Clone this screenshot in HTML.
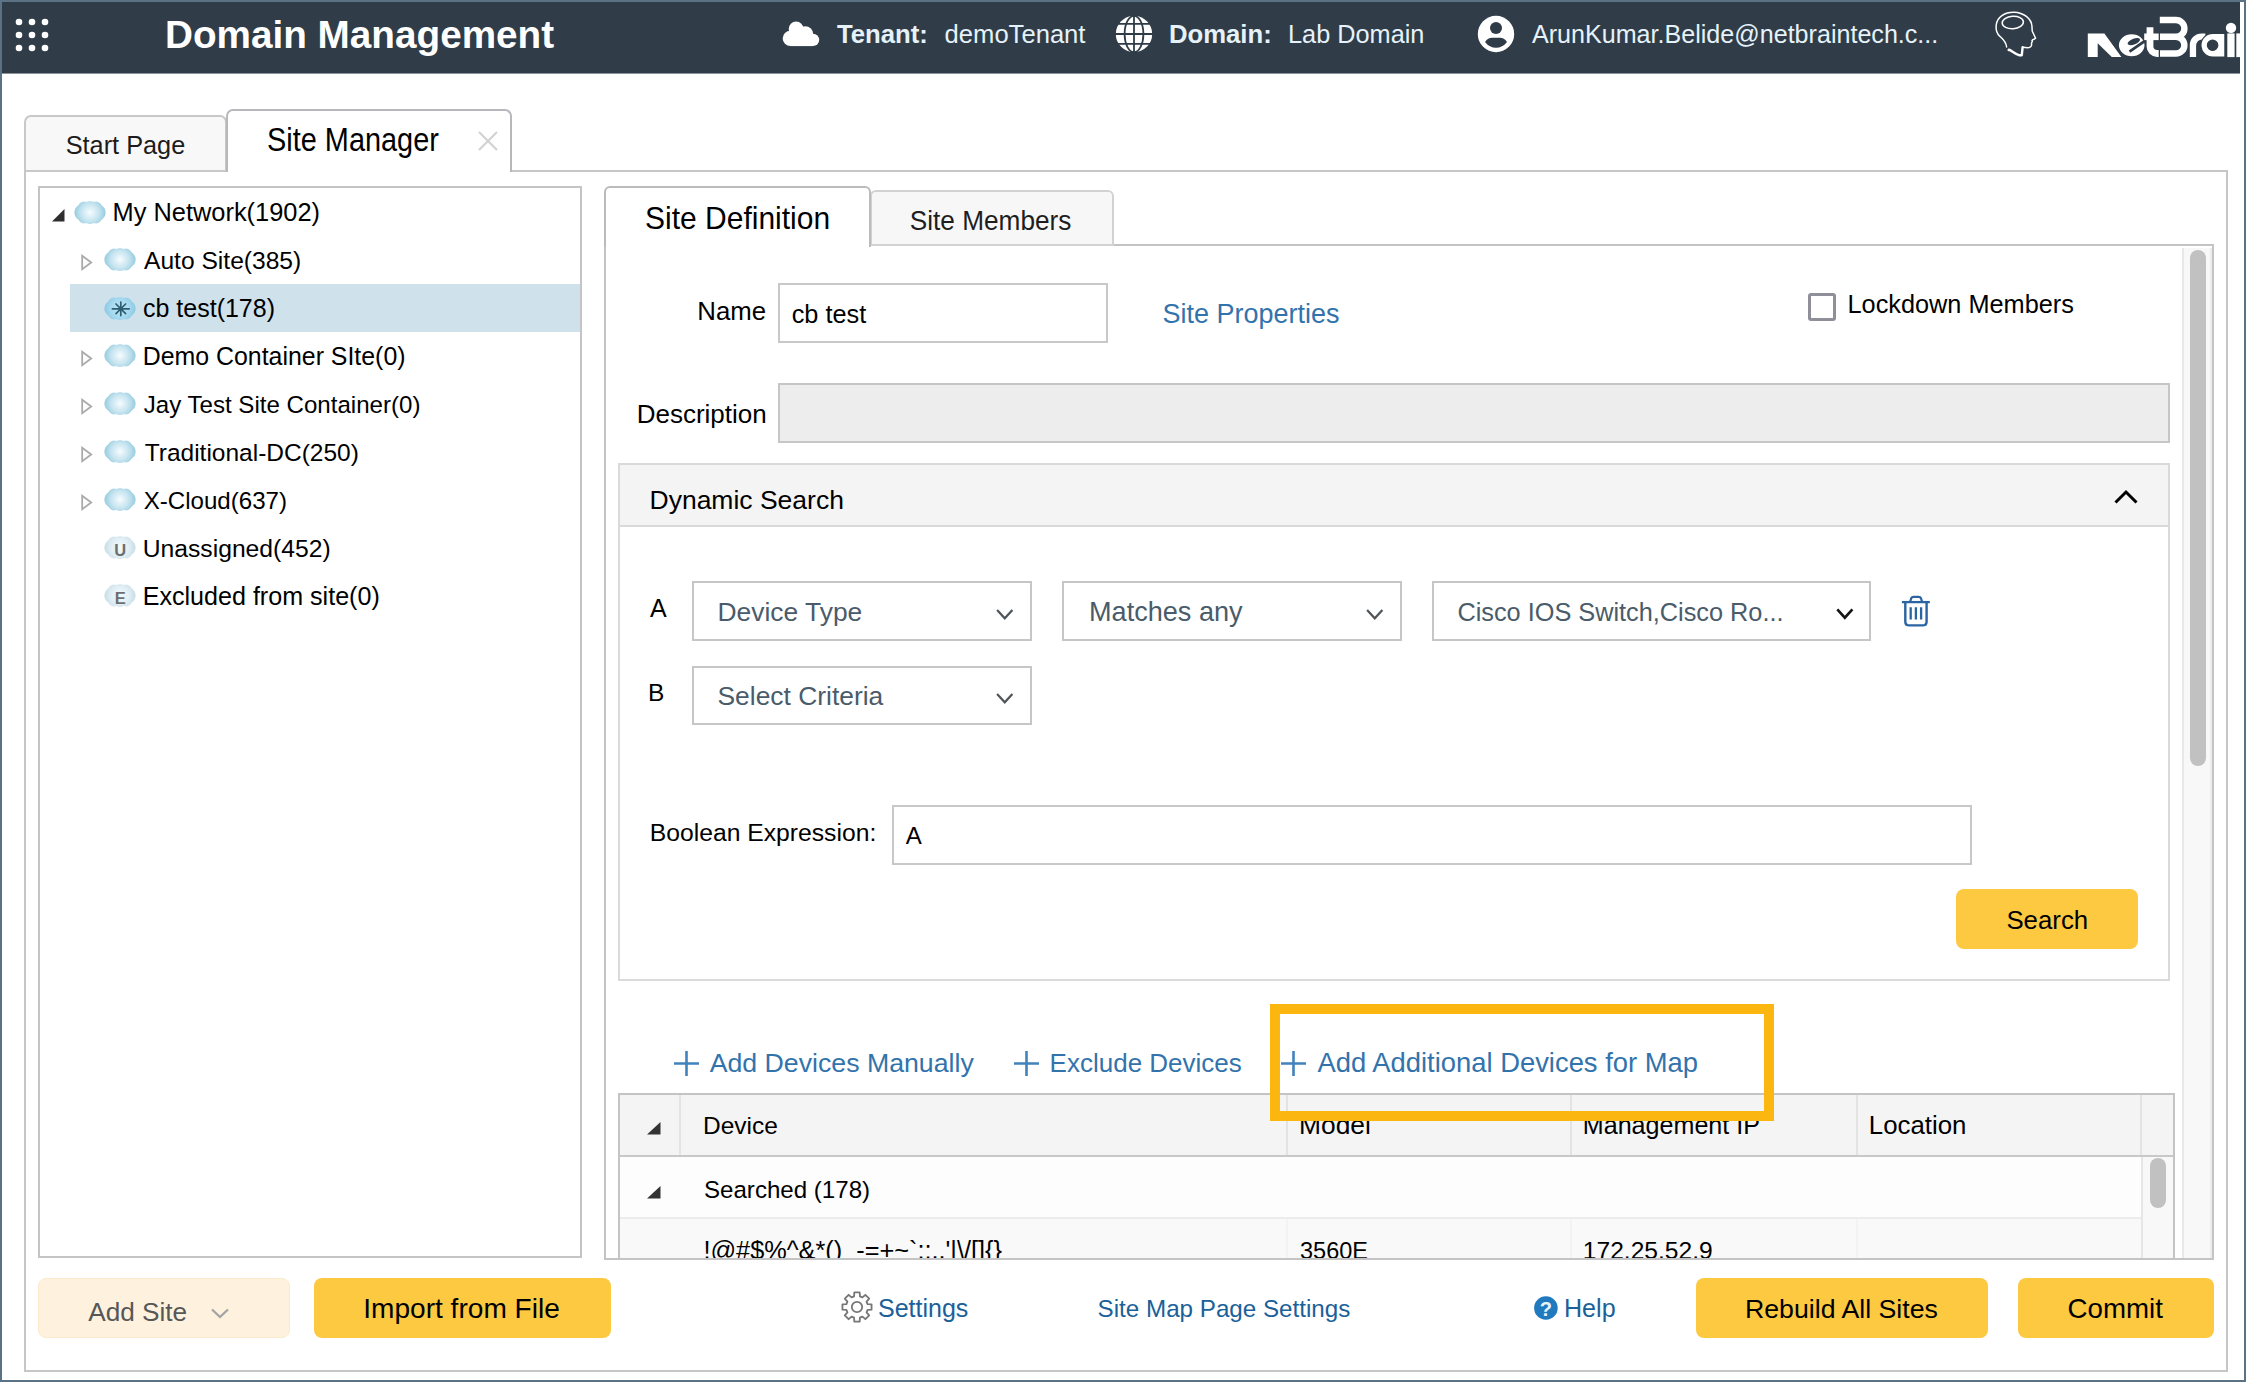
<!DOCTYPE html>
<html><head><meta charset="utf-8"><title>Domain Management</title>
<style>
html,body{margin:0;padding:0;}
body{width:2246px;height:1382px;position:relative;overflow:hidden;background:#5a7284;font-family:'Liberation Sans', sans-serif;}
.b{position:absolute;display:block;}
.t{position:absolute;white-space:pre;line-height:1;font-family:'Liberation Sans', sans-serif;}
</style></head><body>
<div class="b" style="left:2px;top:2px;width:2242px;height:1378px;background:#ffffff;"></div>
<div class="b" style="left:2px;top:2px;width:2238px;height:71px;background:#303d49;"></div>
<div class="b" style="left:2px;top:73px;width:2238px;height:1px;background:#8a939a;"></div>
<svg class="b" style="left:0px;top:0px;" width="60" height="60" viewBox="0 0 60 60"><circle cx="19" cy="22" r="3.3" fill="#fff"/><circle cx="19" cy="35" r="3.3" fill="#fff"/><circle cx="19" cy="48" r="3.3" fill="#fff"/><circle cx="32" cy="22" r="3.3" fill="#fff"/><circle cx="32" cy="35" r="3.3" fill="#fff"/><circle cx="32" cy="48" r="3.3" fill="#fff"/><circle cx="45" cy="22" r="3.3" fill="#fff"/><circle cx="45" cy="35" r="3.3" fill="#fff"/><circle cx="45" cy="48" r="3.3" fill="#fff"/></svg>
<svg class="b" style="left:776px;top:12px;" width="50" height="44" viewBox="0 0 50 44"><g fill="#fff"><circle cx="14.4" cy="26.4" r="7.7"/><circle cx="20.1" cy="17" r="7.4"/><circle cx="29.2" cy="22.2" r="8"/><circle cx="37" cy="27.9" r="6.2"/><rect x="14.4" y="24" width="22.6" height="10.1"/></g></svg>
<svg class="b" style="left:1110px;top:10px;" width="50" height="48" viewBox="0 0 50 48"><circle cx="24" cy="24" r="18.2" fill="#fff"/><g fill="none" stroke="#2f3c48" stroke-width="1.8"><ellipse cx="24" cy="24" rx="9.4" ry="18.2"/><path d="M24 4 L24 44 M4 24 L44 24 M4 13.9 L44 13.9 M4 33.9 L44 33.9"/></g></svg>
<svg class="b" style="left:1472px;top:10px;" width="48" height="48" viewBox="0 0 48 48"><circle cx="24" cy="24" r="18.2" fill="#fff"/><circle cx="24" cy="18" r="6" fill="#2f3c48"/><path d="M13 32 Q16 27.8 20 27.8 L28 27.8 Q32 27.8 35 32 Q30.5 37.8 24 37.8 Q17.5 37.8 13 32 Z" fill="#2f3c48"/></svg>
<svg class="b" style="left:1990px;top:8px;" width="55" height="52" viewBox="0 0 55 52"><g fill="none" stroke="#fff" stroke-width="1.5" stroke-linejoin="round" stroke-linecap="round"><path d="M16.6 39 C16 33 12 30.5 9.5 28 C6 24.5 5.8 20 6.3 16.5 C7.5 8.5 15 4 24 4.2 C33.5 4.5 41.5 10.5 42 18.5 C42 20.5 42.2 22 42.2 23 L45.6 30.2 L44.2 31.2 L43 31.5 L42 32.5 L42.3 33.5 L41.5 35 L41.6 37 C41.2 39.5 39 40 35.5 39.6 L32.6 39.3"/><path d="M32.6 39.3 L31.8 47.2 L29 47.2 C25 46 22 43 19 41.6 L18.6 42" stroke-width="2.4"/><ellipse cx="22.8" cy="14.5" rx="10.6" ry="6.2" transform="rotate(-4 22.8 14.5)"/></g></svg>
<div class="b" style="left:2080px;top:10px;width:160px;height:52px;overflow:hidden"><svg width="166" height="52" viewBox="0 0 166 52"><g fill="#fff"><path d="M7.8 23.6 L24.4 23.6 L41.4 46.9 L31.8 46.9 L17.7 33.3 L17.7 46.9 L7.8 46.9 Z"/><ellipse cx="51.7" cy="35.25" rx="13.6" ry="11.9" stroke="#2f3c48" stroke-width="1.6"/></g><g fill="#2f3c48"><ellipse cx="53.8" cy="31.6" rx="6.6" ry="2.9" transform="rotate(-22 53.8 31.6)"/></g><path d="M49.5 41.6 L65 30.8" stroke="#2f3c48" stroke-width="2.8"/><g fill="none" stroke="#fff"><path d="M70 17.3 L70 36.5 A7 7 0 0 0 77 43.5 L79 43.5" stroke-width="6.8"/><path d="M64.2 26.8 L79 26.8" stroke-width="6.6"/><path d="M79.8 10 L96 10 A8.4 8.4 0 0 1 96 26.8 L79.8 26.8 M96 26.8 A8.35 8.35 0 0 1 96 43.5 L79.8 43.5" stroke-width="6.4"/></g><rect x="78.7" y="22" width="1.2" height="26" fill="#2f3c48"/><g fill="#fff"><path d="M109.8 47.1 L109.8 35.2 A11.8 11.8 0 0 1 121.6 23.4 L125.4 23.4 L125.4 29.6 L122 29.6 A5.9 5.9 0 0 0 116.1 35.5 L116.1 47.1 Z"/><path d="M144.9 23.4 L132.9 23.4 A12 11.85 0 0 0 132.9 47.1 L144.9 47.1 Z M132.6 30.05 A5.2 5.2 0 1 0 132.6 40.45 A5.2 5.2 0 1 0 132.6 30.05 Z" fill-rule="evenodd" stroke="#2f3c48" stroke-width="1.2"/><circle cx="151" cy="17.9" r="5.2"/><rect x="147.3" y="23.4" width="7.3" height="23.7"/><rect x="156.3" y="23.4" width="4" height="23.7"/></g></svg></div>
<div class="b" style="left:24px;top:170px;width:2204px;height:1202px;background:#fff;border:2px solid #c6c6c6;box-sizing:border-box;"></div>
<div class="b" style="left:24px;top:115px;width:203px;height:57px;background:#f8f8f8;border:2px solid #c8c8c8;box-sizing:border-box;border-radius:7px 7px 0 0;"></div>
<div class="b" style="left:226px;top:109px;width:286px;height:63px;background:#fff;border:2px solid #b6b8bb;box-sizing:border-box;border-radius:7px 7px 0 0;border-bottom:none;"></div>
<div class="b" style="left:228px;top:168px;width:282px;height:6px;background:#fff;"></div>
<svg class="b" style="left:476px;top:129px;" width="24" height="24" viewBox="0 0 24 24"><path d="M3 3 L21 21 M21 3 L3 21" stroke="#d2d2d2" stroke-width="2.2" fill="none"/></svg>
<div class="b" style="left:38px;top:186px;width:544px;height:1072px;background:#fff;border:2px solid #c4c4c4;box-sizing:border-box;"></div>
<div class="b" style="left:70px;top:284px;width:510px;height:48px;background:#cfe1eb;"></div>
<div class="b" style="left:604px;top:244px;width:1610px;height:1016px;background:#fff;border:2px solid #c4c4c4;box-sizing:border-box;"></div>
<div class="b" style="left:870px;top:190px;width:244px;height:56px;background:#f7f7f7;border:2px solid #d2d2d2;box-sizing:border-box;border-radius:6px 6px 0 0;"></div>
<div class="b" style="left:604px;top:186px;width:267px;height:61px;background:#fff;border:2px solid #b9bbbd;box-sizing:border-box;border-radius:6px 6px 0 0;border-bottom:none;"></div>
<div class="b" style="left:606px;top:240px;width:263px;height:8px;background:#fff;"></div>
<div class="b" style="left:2182px;top:248px;width:30px;height:1011px;background:#f8f8f8;border-left:2px solid #e8e8e8;border-right:2px solid #ececec;box-sizing:border-box;"></div>
<div class="b" style="left:2190px;top:250px;width:16px;height:516px;background:#c1c1c1;border-radius:8px;"></div>
<div class="b" style="left:778px;top:283px;width:330px;height:60px;background:#fff;border:2px solid #c8c8c8;box-sizing:border-box;"></div>
<div class="b" style="left:1808px;top:293px;width:28px;height:28px;background:#fff;border:3px solid #8f8f99;box-sizing:border-box;border-radius:3px;"></div>
<div class="b" style="left:778px;top:383px;width:1392px;height:60px;background:#ededed;border:2px solid #c6c6c6;box-sizing:border-box;"></div>
<div class="b" style="left:618px;top:463px;width:1552px;height:518px;background:#fff;border:2px solid #dadada;box-sizing:border-box;"></div>
<div class="b" style="left:620px;top:465px;width:1548px;height:61px;background:#f4f4f4;"></div>
<div class="b" style="left:620px;top:525px;width:1548px;height:2px;background:#dadada;"></div>
<svg class="b" style="left:2112px;top:486px;" width="28" height="20" viewBox="0 0 28 20"><path d="M3.5 16.5 L14 6 L24.5 16.5" stroke="#000" stroke-width="3" fill="none"/></svg>
<div class="b" style="left:692px;top:581px;width:340px;height:60px;background:#fff;border:2px solid #c6c6c6;box-sizing:border-box;"></div>
<div class="b" style="left:1062px;top:581px;width:340px;height:60px;background:#fff;border:2px solid #c6c6c6;box-sizing:border-box;"></div>
<div class="b" style="left:1432px;top:581px;width:439px;height:60px;background:#fff;border:2px solid #c6c6c6;box-sizing:border-box;"></div>
<div class="b" style="left:692px;top:666px;width:340px;height:59px;background:#fff;border:2px solid #c6c6c6;box-sizing:border-box;"></div>
<svg class="b" style="left:994.2px;top:606.7px;" width="21.5" height="14.7" viewBox="0 0 21.5 14.7"><path d="M3.10 3.10 L10.75 11.38 L18.40 3.10" stroke="#4f5459" stroke-width="2.2" fill="none"/></svg>
<svg class="b" style="left:1364.3px;top:606.7px;" width="21.5" height="14.7" viewBox="0 0 21.5 14.7"><path d="M3.10 3.10 L10.75 11.38 L18.40 3.10" stroke="#4f5459" stroke-width="2.2" fill="none"/></svg>
<svg class="b" style="left:1834.2px;top:606.2px;" width="21.7" height="15.3" viewBox="0 0 21.7 15.3"><path d="M3.30 3.30 L10.85 11.74 L18.40 3.30" stroke="#151515" stroke-width="2.6" fill="none"/></svg>
<svg class="b" style="left:994.2px;top:690.7px;" width="21.5" height="14.7" viewBox="0 0 21.5 14.7"><path d="M3.10 3.10 L10.75 11.38 L18.40 3.10" stroke="#4f5459" stroke-width="2.2" fill="none"/></svg>
<svg class="b" style="left:1890px;top:585px;" width="50" height="50" viewBox="0 0 50 50"><g fill="none" stroke="#2a64a3" stroke-linecap="butt" stroke-linejoin="round"><path d="M11.9 17.1 L39.8 17.1" stroke-width="2.3"/><path d="M20.2 16.6 L21.2 13.2 Q21.8 11.9 23.6 11.9 L28.6 11.9 Q30.4 11.9 31 13.2 L32 16.6" stroke-width="2.2"/><path d="M15.3 17.5 L15.3 36.4 Q15.3 40.4 19.3 40.4 L32.6 40.4 Q36.6 40.4 36.6 36.4 L36.6 17.5" stroke-width="2.4"/><path d="M20.7 22.3 L20.7 34.6 M25.9 22.3 L25.9 34.6 M31.1 22.3 L31.1 34.6" stroke-width="2.3"/></g></svg>
<div class="b" style="left:892px;top:805px;width:1080px;height:60px;background:#fff;border:2px solid #c8c8c8;box-sizing:border-box;"></div>
<div class="b" style="left:1956px;top:889px;width:182px;height:60px;background:#fdc941;border-radius:8px;"></div>
<svg class="b" style="left:673.7px;top:1051px;" width="25" height="25" viewBox="0 0 25 25"><path d="M12.5 0 L12.5 25 M0 12.5 L25 12.5" stroke="#4282bd" stroke-width="2.6"/></svg>
<svg class="b" style="left:1013.9px;top:1051px;" width="25" height="25" viewBox="0 0 25 25"><path d="M12.5 0 L12.5 25 M0 12.5 L25 12.5" stroke="#4282bd" stroke-width="2.6"/></svg>
<svg class="b" style="left:1281px;top:1051px;" width="25" height="25" viewBox="0 0 25 25"><path d="M12.5 0 L12.5 25 M0 12.5 L25 12.5" stroke="#4282bd" stroke-width="2.6"/></svg>
<div class="b" style="left:618px;top:1093px;width:1557px;height:167px;background:#fff;border:2px solid #c4c4c4;box-sizing:border-box;"></div>
<div class="b" style="left:620px;top:1095px;width:1521px;height:60px;background:#f4f4f4;"></div>
<div class="b" style="left:2141px;top:1095px;width:32px;height:60px;background:#f4f4f4;"></div>
<div class="b" style="left:620px;top:1155px;width:1553px;height:2px;background:#c8c8c8;"></div>
<div class="b" style="left:678.5px;top:1095px;width:2px;height:60px;background:#e3e3e3;"></div>
<div class="b" style="left:1286px;top:1095px;width:2px;height:60px;background:#e3e3e3;"></div>
<div class="b" style="left:1570px;top:1095px;width:2px;height:60px;background:#e3e3e3;"></div>
<div class="b" style="left:1856px;top:1095px;width:2px;height:60px;background:#e3e3e3;"></div>
<div class="b" style="left:2140px;top:1095px;width:2px;height:60px;background:#e3e3e3;"></div>
<div class="b" style="left:620px;top:1157px;width:1521px;height:60px;background:#fdfdfd;"></div>
<div class="b" style="left:620px;top:1217px;width:1521px;height:2px;background:#ececec;"></div>
<div class="b" style="left:620px;top:1219px;width:1521px;height:40px;background:#f9f9f9;"></div>
<div class="b" style="left:1286px;top:1219px;width:2px;height:39px;background:#f3f3f3;"></div>
<div class="b" style="left:1570px;top:1219px;width:2px;height:39px;background:#f3f3f3;"></div>
<div class="b" style="left:1856px;top:1219px;width:2px;height:39px;background:#f3f3f3;"></div>
<div class="b" style="left:2141px;top:1157px;width:32px;height:102px;background:#f8f8f8;"></div>
<div class="b" style="left:2141px;top:1157px;width:2px;height:102px;background:#e6e6e6;"></div>
<div class="b" style="left:2150px;top:1158px;width:16px;height:50px;background:#c1c1c1;border-radius:8px;"></div>
<svg class="b" style="left:647px;top:1122px;" width="14" height="13" viewBox="0 0 14 13"><path d="M13.5 0 L13.5 12.5 L0 12.5 Z" fill="#333"/></svg>
<svg class="b" style="left:647px;top:1186px;" width="14" height="13" viewBox="0 0 14 13"><path d="M13.5 0 L13.5 12.5 L0 12.5 Z" fill="#333"/></svg>
<svg class="b" style="left:51.5px;top:208.5px;" width="13" height="13" viewBox="0 0 13 13"><path d="M12.5 0 L12.5 12.5 L0 12.5 Z" fill="#2e2e2e"/></svg>
<svg class="b" style="left:80px;top:254.1px;" width="14" height="18" viewBox="0 0 14 18"><path d="M2.2 1.8 L11.2 8.5 L2.2 15.2 Z" fill="none" stroke="#aaaaaa" stroke-width="1.8"/></svg>
<svg class="b" style="left:80px;top:350.1px;" width="14" height="18" viewBox="0 0 14 18"><path d="M2.2 1.8 L11.2 8.5 L2.2 15.2 Z" fill="none" stroke="#aaaaaa" stroke-width="1.8"/></svg>
<svg class="b" style="left:80px;top:398.1px;" width="14" height="18" viewBox="0 0 14 18"><path d="M2.2 1.8 L11.2 8.5 L2.2 15.2 Z" fill="none" stroke="#aaaaaa" stroke-width="1.8"/></svg>
<svg class="b" style="left:80px;top:446.1px;" width="14" height="18" viewBox="0 0 14 18"><path d="M2.2 1.8 L11.2 8.5 L2.2 15.2 Z" fill="none" stroke="#aaaaaa" stroke-width="1.8"/></svg>
<svg class="b" style="left:80px;top:494.1px;" width="14" height="18" viewBox="0 0 14 18"><path d="M2.2 1.8 L11.2 8.5 L2.2 15.2 Z" fill="none" stroke="#aaaaaa" stroke-width="1.8"/></svg>
<svg class="b" style="left:74px;top:200.5px;" width="32" height="23" viewBox="0 0 32 23"><defs><radialGradient id="cg1" gradientUnits="userSpaceOnUse" cx="16" cy="11.5" r="17" fx="16" fy="11.5"><stop offset="0" stop-color="#f6fcfe"/><stop offset="0.55" stop-color="#c3e3ef"/><stop offset="1" stop-color="#8ec6db"/></radialGradient></defs><g fill="url(#cg1)"><ellipse cx="16" cy="11.5" rx="15.6" ry="11"/><circle cx="10" cy="6.2" r="5.6"/><circle cx="22" cy="6.2" r="5.6"/><circle cx="16" cy="4.8" r="4.6"/><circle cx="16" cy="18.4" r="4.6"/><circle cx="10" cy="16.8" r="5.6"/><circle cx="22" cy="16.8" r="5.6"/></g></svg>
<svg class="b" style="left:104px;top:248.1px;" width="32" height="23" viewBox="0 0 32 23"><defs><radialGradient id="cg2" gradientUnits="userSpaceOnUse" cx="16" cy="11.5" r="17" fx="16" fy="11.5"><stop offset="0" stop-color="#f6fcfe"/><stop offset="0.55" stop-color="#c3e3ef"/><stop offset="1" stop-color="#8ec6db"/></radialGradient></defs><g fill="url(#cg2)"><ellipse cx="16" cy="11.5" rx="15.6" ry="11"/><circle cx="10" cy="6.2" r="5.6"/><circle cx="22" cy="6.2" r="5.6"/><circle cx="16" cy="4.8" r="4.6"/><circle cx="16" cy="18.4" r="4.6"/><circle cx="10" cy="16.8" r="5.6"/><circle cx="22" cy="16.8" r="5.6"/></g></svg>
<svg class="b" style="left:104px;top:344.1px;" width="32" height="23" viewBox="0 0 32 23"><defs><radialGradient id="cg3" gradientUnits="userSpaceOnUse" cx="16" cy="11.5" r="17" fx="16" fy="11.5"><stop offset="0" stop-color="#f6fcfe"/><stop offset="0.55" stop-color="#c3e3ef"/><stop offset="1" stop-color="#8ec6db"/></radialGradient></defs><g fill="url(#cg3)"><ellipse cx="16" cy="11.5" rx="15.6" ry="11"/><circle cx="10" cy="6.2" r="5.6"/><circle cx="22" cy="6.2" r="5.6"/><circle cx="16" cy="4.8" r="4.6"/><circle cx="16" cy="18.4" r="4.6"/><circle cx="10" cy="16.8" r="5.6"/><circle cx="22" cy="16.8" r="5.6"/></g></svg>
<svg class="b" style="left:104px;top:392.1px;" width="32" height="23" viewBox="0 0 32 23"><defs><radialGradient id="cg4" gradientUnits="userSpaceOnUse" cx="16" cy="11.5" r="17" fx="16" fy="11.5"><stop offset="0" stop-color="#f6fcfe"/><stop offset="0.55" stop-color="#c3e3ef"/><stop offset="1" stop-color="#8ec6db"/></radialGradient></defs><g fill="url(#cg4)"><ellipse cx="16" cy="11.5" rx="15.6" ry="11"/><circle cx="10" cy="6.2" r="5.6"/><circle cx="22" cy="6.2" r="5.6"/><circle cx="16" cy="4.8" r="4.6"/><circle cx="16" cy="18.4" r="4.6"/><circle cx="10" cy="16.8" r="5.6"/><circle cx="22" cy="16.8" r="5.6"/></g></svg>
<svg class="b" style="left:104px;top:440.1px;" width="32" height="23" viewBox="0 0 32 23"><defs><radialGradient id="cg5" gradientUnits="userSpaceOnUse" cx="16" cy="11.5" r="17" fx="16" fy="11.5"><stop offset="0" stop-color="#f6fcfe"/><stop offset="0.55" stop-color="#c3e3ef"/><stop offset="1" stop-color="#8ec6db"/></radialGradient></defs><g fill="url(#cg5)"><ellipse cx="16" cy="11.5" rx="15.6" ry="11"/><circle cx="10" cy="6.2" r="5.6"/><circle cx="22" cy="6.2" r="5.6"/><circle cx="16" cy="4.8" r="4.6"/><circle cx="16" cy="18.4" r="4.6"/><circle cx="10" cy="16.8" r="5.6"/><circle cx="22" cy="16.8" r="5.6"/></g></svg>
<svg class="b" style="left:104px;top:488.1px;" width="32" height="23" viewBox="0 0 32 23"><defs><radialGradient id="cg6" gradientUnits="userSpaceOnUse" cx="16" cy="11.5" r="17" fx="16" fy="11.5"><stop offset="0" stop-color="#f6fcfe"/><stop offset="0.55" stop-color="#c3e3ef"/><stop offset="1" stop-color="#8ec6db"/></radialGradient></defs><g fill="url(#cg6)"><ellipse cx="16" cy="11.5" rx="15.6" ry="11"/><circle cx="10" cy="6.2" r="5.6"/><circle cx="22" cy="6.2" r="5.6"/><circle cx="16" cy="4.8" r="4.6"/><circle cx="16" cy="18.4" r="4.6"/><circle cx="10" cy="16.8" r="5.6"/><circle cx="22" cy="16.8" r="5.6"/></g></svg>
<svg class="b" style="left:104px;top:297px;" width="32" height="23" viewBox="0 0 32 23"><defs><radialGradient id="cg7" gradientUnits="userSpaceOnUse" cx="16" cy="11.5" r="17" fx="16" fy="11.5"><stop offset="0" stop-color="#bfe6f8"/><stop offset="0.55" stop-color="#a6d9f0"/><stop offset="1" stop-color="#86c4e0"/></radialGradient></defs><g fill="url(#cg7)"><ellipse cx="16" cy="11.5" rx="15.6" ry="11"/><circle cx="10" cy="6.2" r="5.6"/><circle cx="22" cy="6.2" r="5.6"/><circle cx="16" cy="4.8" r="4.6"/><circle cx="16" cy="18.4" r="4.6"/><circle cx="10" cy="16.8" r="5.6"/><circle cx="22" cy="16.8" r="5.6"/></g><g stroke="#2d5f73" stroke-width="1.7" stroke-linecap="round"><path d="M16.8 5 L16.8 18.6 M8.4 11.8 L25.2 11.8 M12 7 L21.6 16.6 M21.6 7 L12 16.6"/></g></svg>
<svg class="b" style="left:104px;top:536px;" width="32" height="23" viewBox="0 0 32 23"><defs><radialGradient id="cg8" gradientUnits="userSpaceOnUse" cx="16" cy="11.5" r="17" fx="16" fy="11.5"><stop offset="0" stop-color="#f4fafc"/><stop offset="0.55" stop-color="#dfeef4"/><stop offset="1" stop-color="#c4d9e2"/></radialGradient></defs><g fill="url(#cg8)"><ellipse cx="16" cy="11.5" rx="15.6" ry="11"/><circle cx="10" cy="6.2" r="5.6"/><circle cx="22" cy="6.2" r="5.6"/><circle cx="16" cy="4.8" r="4.6"/><circle cx="16" cy="18.4" r="4.6"/><circle cx="10" cy="16.8" r="5.6"/><circle cx="22" cy="16.8" r="5.6"/></g><text x="16.3" y="19.6" text-anchor="middle" font-family="Liberation Sans" font-weight="700" font-size="16.5" fill="#6e6e6e">U</text></svg>
<svg class="b" style="left:104px;top:584px;" width="32" height="23" viewBox="0 0 32 23"><defs><radialGradient id="cg9" gradientUnits="userSpaceOnUse" cx="16" cy="11.5" r="17" fx="16" fy="11.5"><stop offset="0" stop-color="#f4fafc"/><stop offset="0.55" stop-color="#dfeef4"/><stop offset="1" stop-color="#c4d9e2"/></radialGradient></defs><g fill="url(#cg9)"><ellipse cx="16" cy="11.5" rx="15.6" ry="11"/><circle cx="10" cy="6.2" r="5.6"/><circle cx="22" cy="6.2" r="5.6"/><circle cx="16" cy="4.8" r="4.6"/><circle cx="16" cy="18.4" r="4.6"/><circle cx="10" cy="16.8" r="5.6"/><circle cx="22" cy="16.8" r="5.6"/></g><text x="16.3" y="19.6" text-anchor="middle" font-family="Liberation Sans" font-weight="700" font-size="16.5" fill="#6e6e6e">E</text></svg>
<div class="b" style="left:38px;top:1278px;width:252px;height:60px;background:#fef2de;border:1px solid #fae9cb;box-sizing:border-box;border-radius:8px;"></div>
<svg class="b" style="left:209px;top:1306px;" width="22" height="16" viewBox="0 0 22 16"><path d="M3 3.5 L11 11 L19 3.5" stroke="#a3a3a3" stroke-width="2.3" fill="none"/></svg>
<div class="b" style="left:314px;top:1278px;width:297px;height:60px;background:#fdc941;border-radius:8px;"></div>
<div class="b" style="left:1696px;top:1278px;width:292px;height:60px;background:#fdc941;border-radius:8px;"></div>
<div class="b" style="left:2018px;top:1278px;width:196px;height:60px;background:#fdc941;border-radius:8px;"></div>
<svg class="b" style="left:840px;top:1290px;" width="34" height="34" viewBox="0 0 34 34"><g fill="none" stroke="#767676" stroke-width="1.8" stroke-linejoin="round"><path d="M14.06 6.40 L14.30 2.45 L19.70 2.45 L19.94 6.40 L22.42 7.43 L25.38 4.80 L29.20 8.62 L26.57 11.58 L27.60 14.06 L31.55 14.30 L31.55 19.70 L27.60 19.94 L26.57 22.42 L29.20 25.38 L25.38 29.20 L22.42 26.57 L19.94 27.60 L19.70 31.55 L14.30 31.55 L14.06 27.60 L11.58 26.57 L8.62 29.20 L4.80 25.38 L7.43 22.42 L6.40 19.94 L2.45 19.70 L2.45 14.30 L6.40 14.06 L7.43 11.58 L4.80 8.62 L8.62 4.80 L11.58 7.43 Z"/><circle cx="17" cy="17" r="5.2"/></g></svg>
<svg class="b" style="left:1533px;top:1296px;" width="26" height="26" viewBox="0 0 26 26"><circle cx="12.9" cy="12" r="11.8" fill="#2179be"/><text x="12.9" y="19.6" text-anchor="middle" font-family="Liberation Sans" font-weight="700" font-size="20" fill="#e8f4fc">?</text></svg>
<span class="t" style="left:165px;top:16px;font-size:38.7px;color:#ffffff;font-weight:700;">Domain Management</span>
<span class="t" style="left:837px;top:21.5px;font-size:25.7px;color:#e6f2fa;font-weight:700;">Tenant:</span>
<span class="t" style="left:944.6px;top:21.5px;font-size:25.6px;color:#e6f2fa;font-weight:400;">demoTenant</span>
<span class="t" style="left:1169px;top:21.5px;font-size:25.7px;color:#e6f2fa;font-weight:700;">Domain:</span>
<span class="t" style="left:1288px;top:21.5px;font-size:25.3px;color:#e6f2fa;font-weight:400;">Lab Domain</span>
<span class="t" style="left:1532px;top:21.8px;font-size:25.1px;color:#e6f2fa;font-weight:400;">ArunKumar.Belide@netbraintech.c...</span>
<span class="t" style="left:65.7px;top:133.2px;font-size:25.3px;color:#1c1c1c;font-weight:400;transform:scaleY(1.05);transform-origin:0 21px;">Start Page</span>
<span class="t" style="left:267px;top:127.4px;font-size:28.9px;color:#000;font-weight:400;transform:scaleY(1.14);transform-origin:0 24px;">Site Manager</span>
<span class="t" style="left:112.6px;top:200.1px;font-size:25.4px;color:#000;font-weight:400;">My Network(1902)</span>
<span class="t" style="left:144px;top:249.1px;font-size:24.6px;color:#000;font-weight:400;">Auto Site(385)</span>
<span class="t" style="left:143px;top:296.1px;font-size:25.0px;color:#000;font-weight:400;">cb test(178)</span>
<span class="t" style="left:142.7px;top:344.1px;font-size:24.9px;color:#000;font-weight:400;">Demo Container SIte(0)</span>
<span class="t" style="left:143.7px;top:393.1px;font-size:24.1px;color:#000;font-weight:400;">Jay Test Site Container(0)</span>
<span class="t" style="left:144.7px;top:441.1px;font-size:24.5px;color:#000;font-weight:400;">Traditional-DC(250)</span>
<span class="t" style="left:143.7px;top:489.1px;font-size:24.1px;color:#000;font-weight:400;">X-Cloud(637)</span>
<span class="t" style="left:142.7px;top:537.1px;font-size:24.7px;color:#000;font-weight:400;">Unassigned(452)</span>
<span class="t" style="left:142.7px;top:584.1px;font-size:25.1px;color:#000;font-weight:400;">Excluded from site(0)</span>
<span class="t" style="left:645px;top:204.3px;font-size:30.0px;color:#000;font-weight:400;transform:scaleY(1.05);transform-origin:0 25px;">Site Definition</span>
<span class="t" style="left:909.8px;top:208.1px;font-size:26.2px;color:#1e1e1e;font-weight:400;transform:scaleY(1.04);transform-origin:0 22px;">Site Members</span>
<span class="t" style="left:697.3px;top:298.8px;font-size:25.8px;color:#000;font-weight:400;">Name</span>
<span class="t" style="left:791.7px;top:301.7px;font-size:25.3px;color:#000;font-weight:400;">cb test</span>
<span class="t" style="left:1162.4px;top:301.4px;font-size:27.0px;color:#3373ac;font-weight:400;">Site Properties</span>
<span class="t" style="left:1847.5px;top:292px;font-size:25.3px;color:#000;font-weight:400;">Lockdown Members</span>
<span class="t" style="left:636.7px;top:400.7px;font-size:26.0px;color:#000;font-weight:400;">Description</span>
<span class="t" style="left:649.5px;top:486.8px;font-size:26.5px;color:#000;font-weight:400;">Dynamic Search</span>
<span class="t" style="left:650px;top:596px;font-size:25px;color:#000;font-weight:400;">A</span>
<span class="t" style="left:717.5px;top:598.6px;font-size:26.4px;color:#4a5b69;font-weight:400;">Device Type</span>
<span class="t" style="left:1089px;top:597.6px;font-size:27.1px;color:#4a5b69;font-weight:400;">Matches any</span>
<span class="t" style="left:1457.4px;top:599.9px;font-size:25.3px;color:#4a5b69;font-weight:400;">Cisco IOS Switch,Cisco Ro...</span>
<span class="t" style="left:648px;top:681px;font-size:24.5px;color:#000;font-weight:400;">B</span>
<span class="t" style="left:717.5px;top:682.6px;font-size:26.4px;color:#4a5b69;font-weight:400;">Select Criteria</span>
<span class="t" style="left:649.8px;top:821px;font-size:24.7px;color:#000;font-weight:400;">Boolean Expression:</span>
<span class="t" style="left:905.8px;top:824px;font-size:24px;color:#000;font-weight:400;">A</span>
<span class="t" style="left:2006.4px;top:907.8px;font-size:25.8px;color:#000;font-weight:400;">Search</span>
<span class="t" style="left:709.7px;top:1050px;font-size:26.7px;color:#3373ac;font-weight:400;">Add Devices Manually</span>
<span class="t" style="left:1049.6px;top:1050px;font-size:26.0px;color:#3373ac;font-weight:400;">Exclude Devices</span>
<span class="t" style="left:1317.4px;top:1049px;font-size:27.4px;color:#3373ac;font-weight:400;">Add Additional Devices for Map</span>
<span class="t" style="left:703px;top:1114.2px;font-size:24.5px;color:#000;font-weight:400;">Device</span>
<span class="t" style="left:1299px;top:1112.2px;font-size:26.4px;color:#000;font-weight:400;">Model</span>
<span class="t" style="left:1582.8px;top:1113.2px;font-size:25.1px;color:#000;font-weight:400;">Management IP</span>
<span class="t" style="left:1868.8px;top:1113.2px;font-size:25.8px;color:#000;font-weight:400;">Location</span>
<span class="t" style="left:704px;top:1178px;font-size:24.1px;color:#000;font-weight:400;">Searched (178)</span>
<span class="t" style="left:703.4px;top:1238px;font-size:25.3px;color:#000;font-weight:400;">!@#$%^&amp;*()_-=+~`:;,.'|\/[]{}</span>
<span class="t" style="left:1300px;top:1240px;font-size:23.5px;color:#000;font-weight:400;">3560E</span>
<span class="t" style="left:1582.8px;top:1239px;font-size:24.6px;color:#000;font-weight:400;">172.25.52.9</span>
<span class="t" style="left:88.2px;top:1298.8px;font-size:26.2px;color:#575757;font-weight:400;">Add Site</span>
<span class="t" style="left:363.2px;top:1295.1px;font-size:28.1px;color:#000;font-weight:400;">Import from File</span>
<span class="t" style="left:878px;top:1296.2px;font-size:25.0px;color:#1a6199;font-weight:400;">Settings</span>
<span class="t" style="left:1097.6px;top:1297.2px;font-size:24.2px;color:#1a6199;font-weight:400;">Site Map Page Settings</span>
<span class="t" style="left:1564px;top:1296px;font-size:25.1px;color:#1a6199;font-weight:400;">Help</span>
<span class="t" style="left:1745px;top:1296px;font-size:26.7px;color:#000;font-weight:400;">Rebuild All Sites</span>
<span class="t" style="left:2067.5px;top:1295px;font-size:27.7px;color:#000;font-weight:400;">Commit</span>
<div class="b" style="left:606px;top:1258px;width:1606px;height:2px;background:#c4c4c4;"></div>
<div class="b" style="left:606px;top:1260px;width:1606px;height:16px;background:#fff;"></div>
<div class="b" style="left:1270px;top:1004px;width:504px;height:117px;background:transparent;border:10px solid #fbb710;box-sizing:border-box;"></div>
</body></html>
